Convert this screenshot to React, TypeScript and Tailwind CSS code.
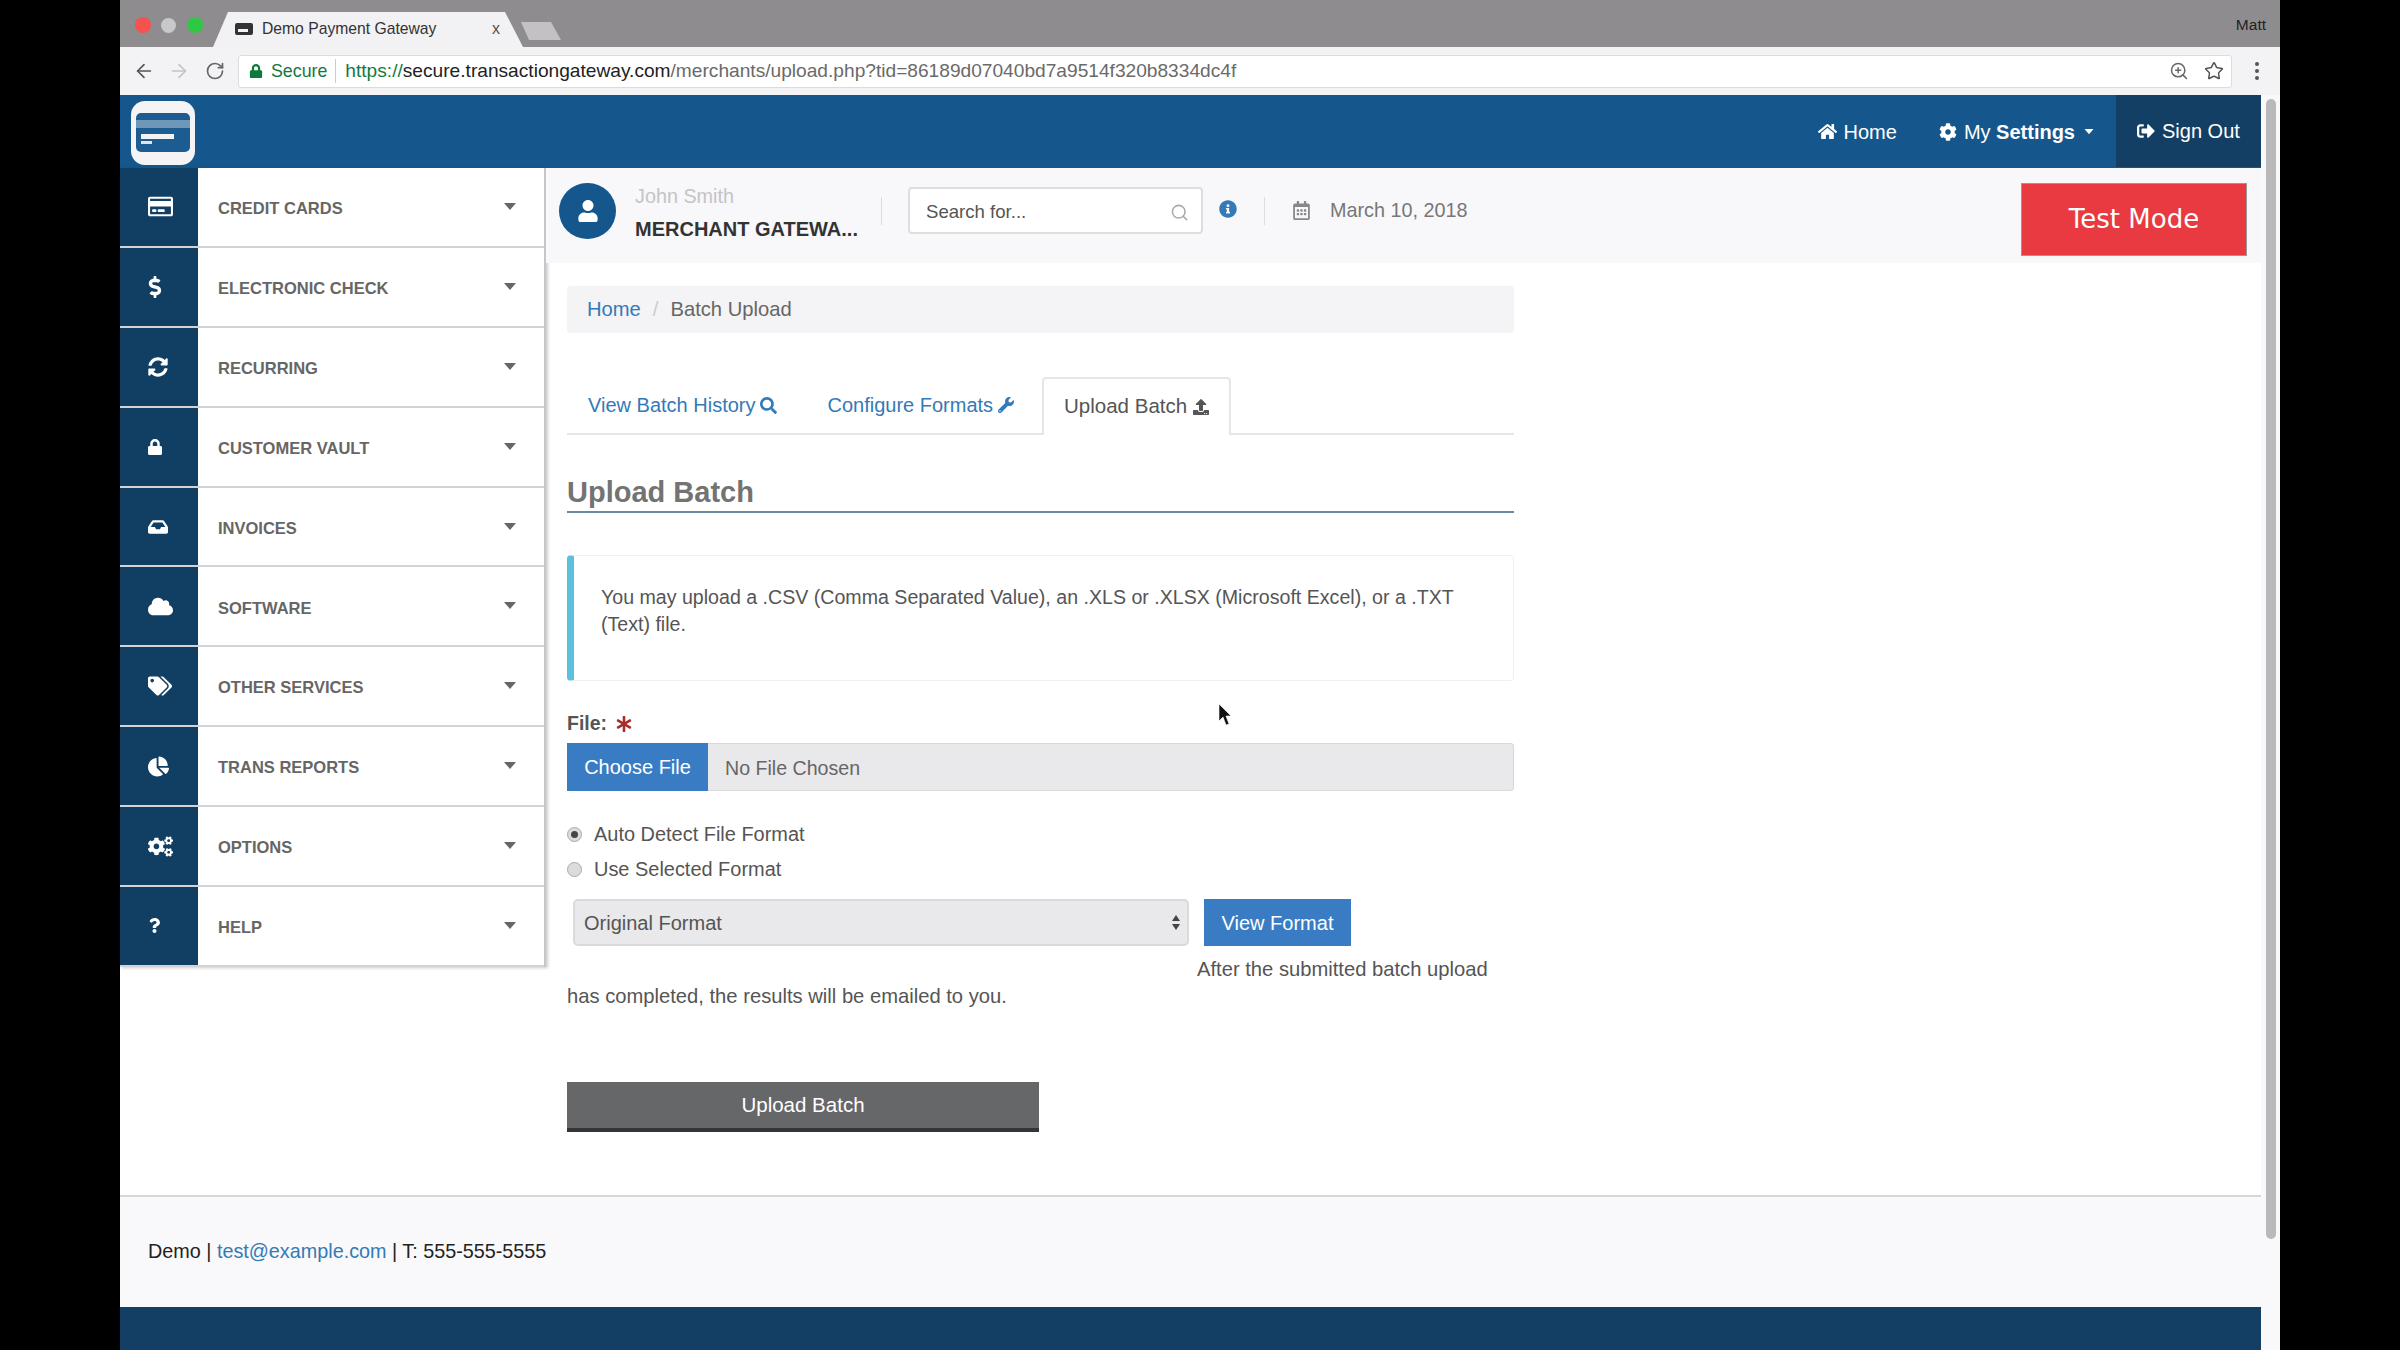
import React from "react";
import {
  FaRegCreditCard, FaDollarSign, FaSyncAlt, FaLock, FaInbox, FaCloud, FaTags, FaChartPie, FaCogs, FaQuestion,
  FaHome, FaCog, FaSignOutAlt, FaUser, FaInfoCircle, FaRegCalendarAlt, FaSearch, FaWrench, FaUpload, FaAsterisk,
} from "react-icons/fa";
import { ArrowLeft, ArrowRight, RotateCw, ZoomIn, Star, Search } from "lucide-react";

const rows: [string, React.ReactNode][] = [
  ["CREDIT CARDS", <FaRegCreditCard size={25} />],
  ["ELECTRONIC CHECK", <FaDollarSign size={22} className="-ml-[4px]" />],
  ["RECURRING", <FaSyncAlt size={20} />],
  ["CUSTOMER VAULT", <FaLock size={16} className="-ml-[1px]" />],
  ["INVOICES", <FaInbox size={20} />],
  ["SOFTWARE", <FaCloud size={25} />],
  ["OTHER SERVICES", <FaTags size={24} />],
  ["TRANS REPORTS", <FaChartPie size={21} />],
  ["OPTIONS", <FaCogs size={25} />],
  ["HELP", <FaQuestion size={15} className="-ml-[1px]" />],
];

function Caret({ cls }: { cls: string }) {
  return <span className={`inline-block border-x-[6.5px] border-x-transparent border-t-[7px] ${cls}`} />;
}

function Logo() {
  return (
    <svg width="64" height="64" viewBox="0 0 64 64" className="ml-[11px] mt-[6px] shrink-0">
      <rect width="64" height="64" rx="14" fill="#f4f3f6" />
      <rect x="5" y="12" width="54" height="39" rx="5" fill="#1c5c90" />
      <rect x="5" y="19" width="54" height="8" fill="#6f98b8" />
      <rect x="10" y="33" width="33" height="5" fill="#f2f2f5" />
      <rect x="10" y="40" width="11" height="3" fill="#dfe4ea" />
    </svg>
  );
}

function BrowserChrome() {
  return (
    <div className="shrink-0">
      <div className="relative h-[47px] bg-[#8e8c8f]">
        <div className="flex items-center gap-[10px] pl-[15px] pt-[17px]">
          <span className="h-[16px] w-[16px] rounded-full bg-[#f3524e]" />
          <span className="h-[15px] w-[15px] rounded-full bg-[#c8c7c9]" />
          <span className="ml-[1px] h-[16px] w-[16px] rounded-full bg-[#2ec844]" />
        </div>
        <div className="absolute bottom-0 left-[93px] h-[35px] w-[310px] bg-[#f2f1f3] [clip-path:polygon(15px_0,292px_0,100%_100%,0_100%)]" />
        <div className="absolute bottom-[7px] left-[401px] h-[18px] w-[40px] bg-[#c3c1c3] [clip-path:polygon(0_0,30px_0,100%_100%,8px_100%)]" />
        <div className="absolute left-[115px] top-[23px] h-[12px] w-[18px] rounded-[2px] bg-[#333]">
          <span className="mt-[6px] ml-[3px] block h-[3px] w-[10px] bg-[#f2f1f3]" />
        </div>
        <span className="absolute left-[142px] top-[19px] text-[15.7px] leading-[20px] text-[#333] [font-family:'Liberation_Sans',sans-serif]">Demo Payment Gateway</span>
        <span className="absolute left-[372px] top-[19px] text-[16px] leading-[20px] text-[#555] [font-family:'Liberation_Sans',sans-serif]">x</span>
        <span className="absolute right-[14px] top-[15px] text-[15.5px] leading-[20px] text-[#222] [font-family:'Liberation_Sans',sans-serif]">Matt</span>
      </div>
      <div className="flex h-[48px] items-center bg-[#f3f2f4] pl-[13px] pr-[48px]">
        <ArrowLeft size={22} strokeWidth={1.8} className="text-[#555]" />
        <ArrowRight size={22} strokeWidth={1.8} className="ml-[13px] text-[#c4c4c6]" />
        <RotateCw size={20} strokeWidth={2} className="ml-[15px] text-[#666]" />
        <div className="ml-[13px] flex h-[33px] flex-1 items-center rounded-[3px] border border-[#dcdcdf] bg-white pl-[10px] pr-[7px] text-[17.8px] [font-family:'Liberation_Sans',sans-serif]">
          <FaLock size={14} className="text-[#0b7a3b]" />
          <span className="ml-[8px] text-[#137a3e]">Secure</span>
          <span className="ml-[8px] h-[24px] w-px bg-[#ccc]" />
          <span className="ml-[9px] whitespace-nowrap text-[19.15px]">
            <span className="text-[#137a3e]">https://</span>
            <span className="text-[#222]">secure.transactiongateway.com</span>
            <span className="text-[#6a6a6a]">/merchants/upload.php?tid=86189d07040bd7a9514f320b8334dc4f</span>
          </span>
          <ZoomIn size={20} strokeWidth={1.8} className="ml-auto text-[#666]" />
          <Star size={20} strokeWidth={1.8} className="ml-[15px] text-[#555]" />
        </div>
        <span className="absolute left-[2255px] top-[62px] flex flex-col gap-[3px]">
          <span className="h-[4px] w-[4px] rounded-full bg-[#555]" />
          <span className="h-[4px] w-[4px] rounded-full bg-[#555]" />
          <span className="h-[4px] w-[4px] rounded-full bg-[#555]" />
        </span>
      </div>
    </div>
  );
}

function Header() {
  return (
    <div className="flex h-[73px] shrink-0 items-stretch bg-[#15578c] text-[20px] text-white">
      <Logo />
      <div className="ml-auto flex items-center">
        <FaHome size={19} />
        <span className="ml-[7px]">Home</span>
        <FaCog size={18} className="ml-[42px]" />
        <span className="ml-[7px]">My <b>Settings</b></span>
        <Caret cls="ml-[8px] border-t-white scale-75" />
      </div>
      <div className="ml-[21px] mb-[1px] flex w-[145px] items-center bg-[#133f64] pl-[21px]">
        <FaSignOutAlt size={18} />
        <span className="ml-[7px] whitespace-nowrap">Sign Out</span>
      </div>
    </div>
  );
}

function Sidebar() {
  return (
    <div className="w-[426px] shrink-0">
      <div className="border-r-2 border-[#c6c6c8] shadow-[2px_1px_3px_rgba(0,0,0,0.2)]">
        {rows.map(([label, icon]) => (
          <div key={label} className="flex h-[79.9px] border-b-2 border-[#d3d3d7] bg-white">
            <div className="flex w-[78px] shrink-0 items-center bg-[#113f64] pl-[28px] text-white">{icon}</div>
            <span className="ml-[20px] self-center pt-[3px] text-[16.5px] font-semibold text-[#666]">{label}</span>
            <Caret cls="ml-auto mr-[28px] mb-[1px] self-center border-t-[#666]" />
          </div>
        ))}
      </div>
    </div>
  );
}

function SubHeader() {
  return (
    <div className="flex h-[95px] items-start bg-[#f8f7fa]">
      <div className="ml-[13px] mt-[15px] flex h-[56px] w-[57px] items-center justify-center rounded-full bg-[#15578c]">
        <FaUser size={22} className="text-white" />
      </div>
      <div className="ml-[19px] mt-[14px] w-[246px]">
        <div className="text-[19.8px] leading-[28px] text-[#c4c4c6]">John Smith</div>
        <div className="mt-[5px] text-[20px] font-bold leading-[28px] text-[#333]">MERCHANT GATEWA...</div>
      </div>
      <span className="mt-[29px] h-[28px] w-px bg-[#dcdcdf]" />
      <div className="ml-[26px] mt-[19px] flex h-[47px] w-[295px] items-center rounded-[4px] border-2 border-[#dededf] bg-white pl-[16px] pr-[12px] text-[18.6px] text-[#555]">
        <span className="pt-[3px]">Search for...</span>
        <Search size={19} strokeWidth={2} className="ml-auto mt-[3px] text-[#aaa]" />
      </div>
      <FaInfoCircle size={18} className="ml-[16px] mt-[32px] text-[#337ab7]" />
      <span className="ml-[27px] mt-[29px] h-[28px] w-px bg-[#dcdcdf]" />
      <FaRegCalendarAlt size={19} className="ml-[27px] mt-[33px] text-[#888]" />
      <span className="ml-[19px] mt-[30px] text-[19.8px] leading-[24px] text-[#777]">March 10, 2018</span>
      <div className="ml-auto mr-[14px] mt-[15px] flex h-[73px] w-[226px] items-center justify-center border border-[#999] bg-[#e83a40] text-[26px] text-white [font-family:'DejaVu_Sans',sans-serif]">
        Test Mode
      </div>
    </div>
  );
}

function Radio({ on, label }: { on?: boolean; label: string }) {
  return (
    <div className="flex h-[35px] items-center">
      <span className="flex h-[15px] w-[15px] items-center justify-center rounded-full border border-[#aaa] bg-[#dcdcde]">
        {on && <span className="h-[7px] w-[7px] rounded-full bg-[#444]" />}
      </span>
      <span className="ml-[12px] text-[19.95px] text-[#555]">{label}</span>
    </div>
  );
}

function Content() {
  return (
    <div className="relative flex-1">
      <SubHeader />
      <div className="ml-[21px] w-[947px] text-[20.2px] text-[#555]">
        <div className="mt-[23px] flex h-[47px] items-center rounded-[4px] bg-[#f4f3f5] px-[20px]">
          <span className="text-[#337ab7]">Home</span>
          <span className="mx-[12px] text-[#ccc]">/</span>
          <span className="text-[#666]">Batch Upload</span>
        </div>

        <div className="mt-[44px] flex h-[58px] border-b-2 border-[#e6e6e8] text-[20px] text-[#337ab7]">
          <span className="ml-[21px] flex items-center gap-[5px]">View Batch History <FaSearch size={17} /></span>
          <span className="ml-[50px] flex items-center gap-[5px]">Configure Formats <FaWrench size={16} /></span>
          <span className="-mb-[2px] ml-[28px] flex w-[189px] items-center justify-center gap-[6px] rounded-t-[4px] border-2 border-b-0 border-[#e6e6e8] bg-white pb-[1px] text-[20.5px] text-[#555]">Upload Batch <FaUpload size={16} /></span>
        </div>

        <div className="mt-[40px] border-b-2 border-[#6d8aa5] pb-[2px] text-[29px] font-semibold leading-[34px] text-[#737373]">Upload Batch</div>

        <div className="mt-[42px] flex h-[126px] rounded-[4px] border border-[#f0f0f2] border-l-[7px] border-l-[#5bc0de] pl-[27px] pr-[50px] pt-[28px] text-[19.6px] leading-[27px]">
          <span>You may upload a .CSV (Comma Separated Value), an .XLS or .XLSX (Microsoft Excel), or a .TXT (Text) file.</span>
        </div>

        <div className="mt-[29px] flex h-[28px] items-center text-[19.5px] font-bold">
          File:
          <FaAsterisk size={16} className="ml-[9px] text-[#a82c2c]" />
        </div>
        <div className="mt-[5px] flex h-[48px] rounded-[4px] bg-[#e9e8ea] shadow-[inset_0_0_0_1px_#d8d8da]">
          <span className="flex w-[141px] items-center justify-center bg-[#3a7cc4] text-[20px] text-white">Choose File</span>
          <span className="ml-[17px] self-center pt-[4px] text-[19.6px] text-[#666]">No File Chosen</span>
        </div>

        <div className="mt-[26px]">
          <Radio on label="Auto Detect File Format" />
          <Radio label="Use Selected Format" />
        </div>

        <div className="mt-[12px] flex h-[47px] items-stretch text-[20px]">
          <div className="ml-[6px] flex w-[616px] items-center rounded-[5px] border-2 border-[#dadadc] bg-[#e9e8ea] pl-[9px] pr-[7px] text-[#555]">
            Original Format
            <span className="ml-auto flex flex-col gap-[3px]">
              <span className="border-x-[4px] border-b-[6px] border-x-transparent border-b-[#444]" />
              <span className="border-x-[4px] border-t-[6px] border-x-transparent border-t-[#444]" />
            </span>
          </div>
          <span className="ml-[15px] flex w-[147px] items-center justify-center bg-[#3a7cc4] text-white">View Format</span>
        </div>

        <div className="mt-[10px] leading-[27px]">
          <div className="ml-[630px] whitespace-nowrap">After the submitted batch upload</div>
          <div>has completed, the results will be emailed to you.</div>
        </div>

        <div className="mt-[72px] flex h-[50px] w-[472px] items-center justify-center border-b-4 border-[#333537] bg-[#666769] pt-[1px] text-[20.5px] text-white">Upload Batch</div>
      </div>

      <svg width="14" height="24" viewBox="0 0 14 24" className="absolute left-[672px] top-[535px]">
        <path d="M1 1 L1 18 L5 14 L8 22 L11 21 L8 13 L13 13 Z" fill="#111" stroke="#fff" strokeWidth="0.6" />
      </svg>
    </div>
  );
}

function Footer() {
  return (
    <div className="h-[155px] shrink-0">
      <div className="flex h-[112px] items-center border-t-2 border-[#d6d6d8] bg-[#f9f8fb] pl-[28px] text-[19.8px] text-[#222]">
        <span>Demo | <span className="text-[#337ab7]">test@example.com</span> | T: 555-555-5555</span>
      </div>
      <div className="h-[43px] bg-[#123f63]" />
    </div>
  );
}

export default function App() {
  return (
    <div className="relative flex h-[1350px] w-[2400px] flex-col overflow-hidden bg-black px-[120px] [font-family:'Liberation_Sans',sans-serif]">
      <BrowserChrome />
      <div className="flex flex-1 overflow-hidden">
        <div className="flex w-[2141px] shrink-0 flex-col bg-white">
          <Header />
          <div className="flex flex-1">
            <Sidebar />
            <Content />
          </div>
          <Footer />
        </div>
        <div className="flex-1 bg-[#f9f8fb] pl-[5px] pt-[4px]">
          <div className="h-[1140px] w-[10px] rounded-full bg-[#b9b8bb]" />
        </div>
      </div>
    </div>
  );
}
